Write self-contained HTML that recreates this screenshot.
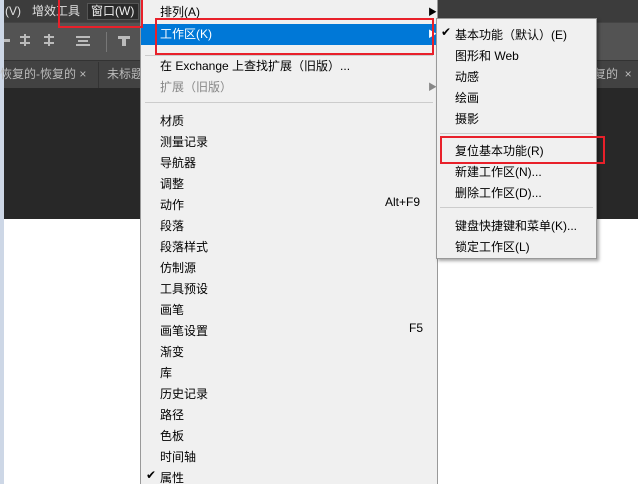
<!DOCTYPE html><html><head><meta charset="utf-8"><style>
*{margin:0;padding:0;box-sizing:border-box}
body{width:638px;height:484px;overflow:hidden;position:relative;background:#fff;font-family:"Liberation Sans","Noto Sans CJK SC",sans-serif;font-size:12px}
.a{position:absolute}
.t{position:absolute;white-space:nowrap;line-height:14px}
</style></head><body>
<div class="a" style="left:0;top:0;width:4px;height:484px;background:#cdd7e6"></div>
<div class="a" style="left:4px;top:0;width:634px;height:22px;background:#3c3c3c"></div>
<div class="t" style="left:5px;top:4px;color:#e0e0e0">(V)</div>
<div class="t" style="left:32px;top:4px;color:#e0e0e0">增效工具</div>
<div class="a" style="left:87px;top:3px;width:52px;height:17px;background:#2a2a2a;border:1px solid #555"></div>
<div class="t" style="left:91px;top:4px;color:#f0f0f0">窗口(W)</div>
<div class="a" style="left:4px;top:22px;width:634px;height:38px;background:#535353;border-top:1px solid #444"></div>
<div class="a" style="left:4px;top:39px;width:6px;height:3px;background:#bbb"></div>
<div class="a" style="left:20px;top:36px;width:10px;height:2px;background:#bbb"></div><div class="a" style="left:24px;top:34px;width:2px;height:12px;background:#bbb"></div><div class="a" style="left:20px;top:42px;width:10px;height:2px;background:#bbb"></div>
<div class="a" style="left:44px;top:36px;width:10px;height:2px;background:#bbb"></div><div class="a" style="left:48px;top:34px;width:2px;height:12px;background:#bbb"></div><div class="a" style="left:44px;top:42px;width:10px;height:2px;background:#bbb"></div>
<div class="a" style="left:76px;top:36px;width:14px;height:2px;background:#bbb"></div><div class="a" style="left:78px;top:40px;width:10px;height:2px;background:#bbb"></div><div class="a" style="left:76px;top:44px;width:14px;height:2px;background:#bbb"></div>
<div class="a" style="left:106px;top:32px;width:1px;height:20px;background:#777"></div>
<div class="a" style="left:118px;top:36px;width:12px;height:3px;background:#bbb"></div><div class="a" style="left:122px;top:36px;width:4px;height:10px;background:#bbb"></div>
<div class="a" style="left:4px;top:60px;width:634px;height:28px;background:#424242;border-top:1px solid #333"></div>
<div class="t" style="left:0;top:67px;color:#bbb">恢复的-恢复的 ×</div>
<div class="a" style="left:98px;top:62px;width:1px;height:26px;background:#333"></div>
<div class="t" style="left:107px;top:67px;color:#bbb">未标题</div>
<div class="t" style="left:594px;top:67px;color:#bbb">复的 &nbsp;×</div>
<div class="a" style="left:4px;top:88px;width:634px;height:131px;background:#282828"></div>
<div class="a" style="left:140px;top:0;width:298px;height:484px;background:#f0f0f0;border-left:1px solid #999;border-right:1px solid #999"></div>
<div class="a" style="left:141px;top:24px;width:296px;height:21px;background:#0078d7"></div>
<div class="t" style="left:160px;top:5px;color:#000">排列(A)</div>
<div class="t" style="left:428px;top:5px;color:#000;font-size:9px">▶</div>
<div class="t" style="left:160px;top:27px;color:#fff">工作区(K)</div>
<div class="t" style="left:428px;top:27px;color:#fff;font-size:9px">▶</div>
<div class="a" style="left:145px;top:55px;width:288px;height:1px;background:#ccc"></div>
<div class="t" style="left:160px;top:59px">在 Exchange 上查找扩展（旧版）...</div>
<div class="t" style="left:160px;top:80px;color:#888">扩展（旧版）</div>
<div class="t" style="left:428px;top:80px;color:#888;font-size:9px">▶</div>
<div class="a" style="left:145px;top:102px;width:288px;height:1px;background:#ccc"></div>
<div class="t" style="left:160px;top:111px;line-height:21px">材质<br>测量记录<br>导航器<br>调整<br>动作<br>段落<br>段落样式<br>仿制源<br>工具预设<br>画笔<br>画笔设置<br>渐变<br>库<br>历史记录<br>路径<br>色板<br>时间轴<br>属性</div>
<div class="t" style="left:385px;top:195px">Alt+F9</div>
<div class="t" style="left:409px;top:321px">F5</div>
<div class="t" style="left:146px;top:468px">✔</div>
<div class="a" style="left:436px;top:18px;width:161px;height:241px;background:#f0f0f0;border:1px solid #999;box-shadow:2px 2px 3px rgba(0,0,0,.35)"></div>
<div class="t" style="left:441px;top:25px">✔</div>
<div class="t" style="left:455px;top:25px;line-height:21px">基本功能（默认）(E)<br>图形和 Web<br>动感<br>绘画<br>摄影</div>
<div class="a" style="left:440px;top:133px;width:153px;height:1px;background:#ccc"></div>
<div class="t" style="left:455px;top:141px;line-height:21px">复位基本功能(R)<br>新建工作区(N)...<br>删除工作区(D)...</div>
<div class="a" style="left:440px;top:207px;width:153px;height:1px;background:#ccc"></div>
<div class="t" style="left:455px;top:216px;line-height:21px">键盘快捷键和菜单(K)...<br>锁定工作区(L)</div>
<div class="a" style="left:58px;top:-2px;width:85px;height:30px;border:2px solid #e8202a"></div>
<div class="a" style="left:155px;top:18px;width:279px;height:37px;border:2px solid #e8202a"></div>
<div class="a" style="left:440px;top:136px;width:165px;height:28px;border:2px solid #e8202a"></div>
</body></html>
